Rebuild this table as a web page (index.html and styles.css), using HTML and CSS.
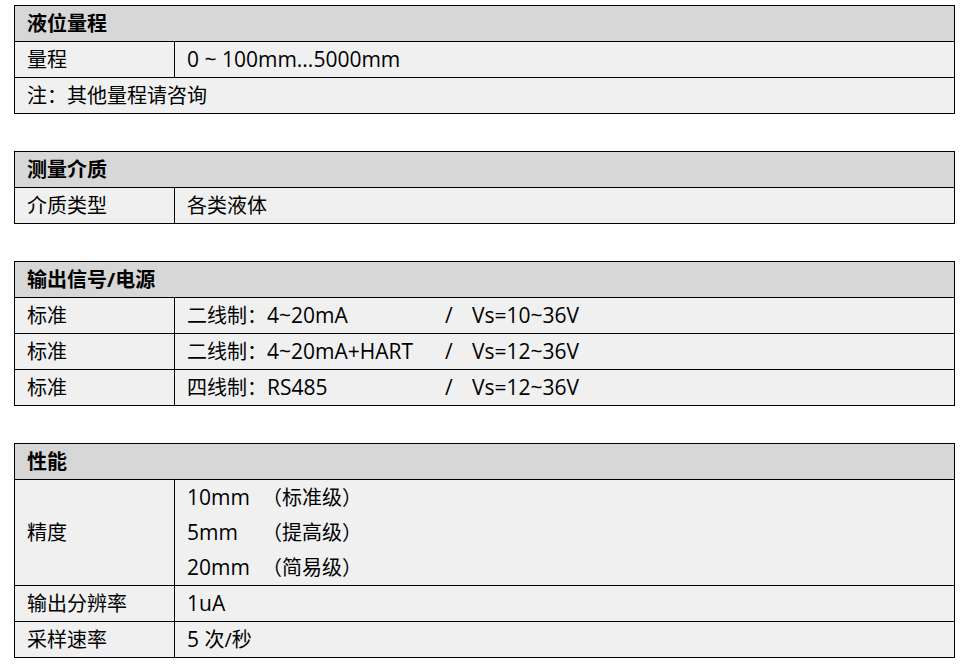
FILE: index.html
```html
<!DOCTYPE html>
<html lang="zh-CN">
<head>
<meta charset="utf-8">
<title>参数</title>
<link rel="stylesheet" href="styles.css">
</head>
<body>
<div class="page">
  <table class="spec">
    <colgroup><col class="c1"><col></colgroup>
    <tr class="head"><th colspan="2">液位量程</th></tr>
    <tr><td>量程</td><td><span class="en">0 ~ 100mm...5000mm</span></td></tr>
    <tr><td colspan="2">注：其他量程请咨询</td></tr>
  </table>

  <table class="spec">
    <colgroup><col class="c1"><col></colgroup>
    <tr class="head"><th colspan="2">测量介质</th></tr>
    <tr><td>介质类型</td><td>各类液体</td></tr>
  </table>

  <table class="spec">
    <colgroup><col class="c1"><col></colgroup>
    <tr class="head"><th colspan="2">输出信号/电源</th></tr>
    <tr><td>标准</td><td><span class="sig">二线制：<span class="en">4~20mA</span></span><span class="slash en">/</span><span class="en">Vs=10~36V</span></td></tr>
    <tr><td>标准</td><td><span class="sig">二线制：<span class="en">4~20mA+HART</span></span><span class="slash en">/</span><span class="en">Vs=12~36V</span></td></tr>
    <tr><td>标准</td><td><span class="sig">四线制：<span class="en">RS485</span></span><span class="slash en">/</span><span class="en">Vs=12~36V</span></td></tr>
  </table>

  <table class="spec">
    <colgroup><col class="c1"><col></colgroup>
    <tr class="head"><th colspan="2">性能</th></tr>
    <tr><td>精度</td><td class="multi">
      <div class="line"><span class="acc en">10mm</span><span>（标准级）</span></div>
      <div class="line"><span class="acc en">5mm</span><span>（提高级）</span></div>
      <div class="line"><span class="acc en">20mm</span><span>（简易级）</span></div>
    </td></tr>
    <tr><td>输出分辨率</td><td><span class="en">1uA</span></td></tr>
    <tr><td>采样速率</td><td><span class="en">5 </span>次/秒</td></tr>
  </table>
</div>
</body>
</html>
```

FILE: styles.css
```css
html, body {
  margin: 0;
  padding: 0;
  background: #ffffff;
}

.page {
  padding: 5px 0 0 14px;
  display: flex;
  flex-direction: column;
  gap: 37px;
  font-family: "Open Sans", "Noto Sans CJK SC", sans-serif;
  font-size: 20px;
  color: #000;
}

.spec {
  border-collapse: collapse;
  width: 941px;
  table-layout: fixed;
}

.spec col.c1 {
  width: 160px;
}

.spec th,
.spec td {
  border: 1px solid #000;
  height: 36px;
  padding: 0 12px;
  text-align: left;
  vertical-align: middle;
  background: #f0f0f0;
  line-height: 1;
  box-sizing: border-box;
}

.spec .head th {
  background: #d7d7d7;
  font-weight: bold;
}

.en {
  font-size: 21px;
}

.sig {
  display: inline-block;
  width: 258px;
}

.slash {
  display: inline-block;
  width: 27px;
}

.multi {
  padding-top: 2px;
  padding-bottom: 2px;
}

.line {
  height: 35px;
  display: flex;
  align-items: center;
}

.acc {
  display: inline-block;
  width: 75px;
}
```
